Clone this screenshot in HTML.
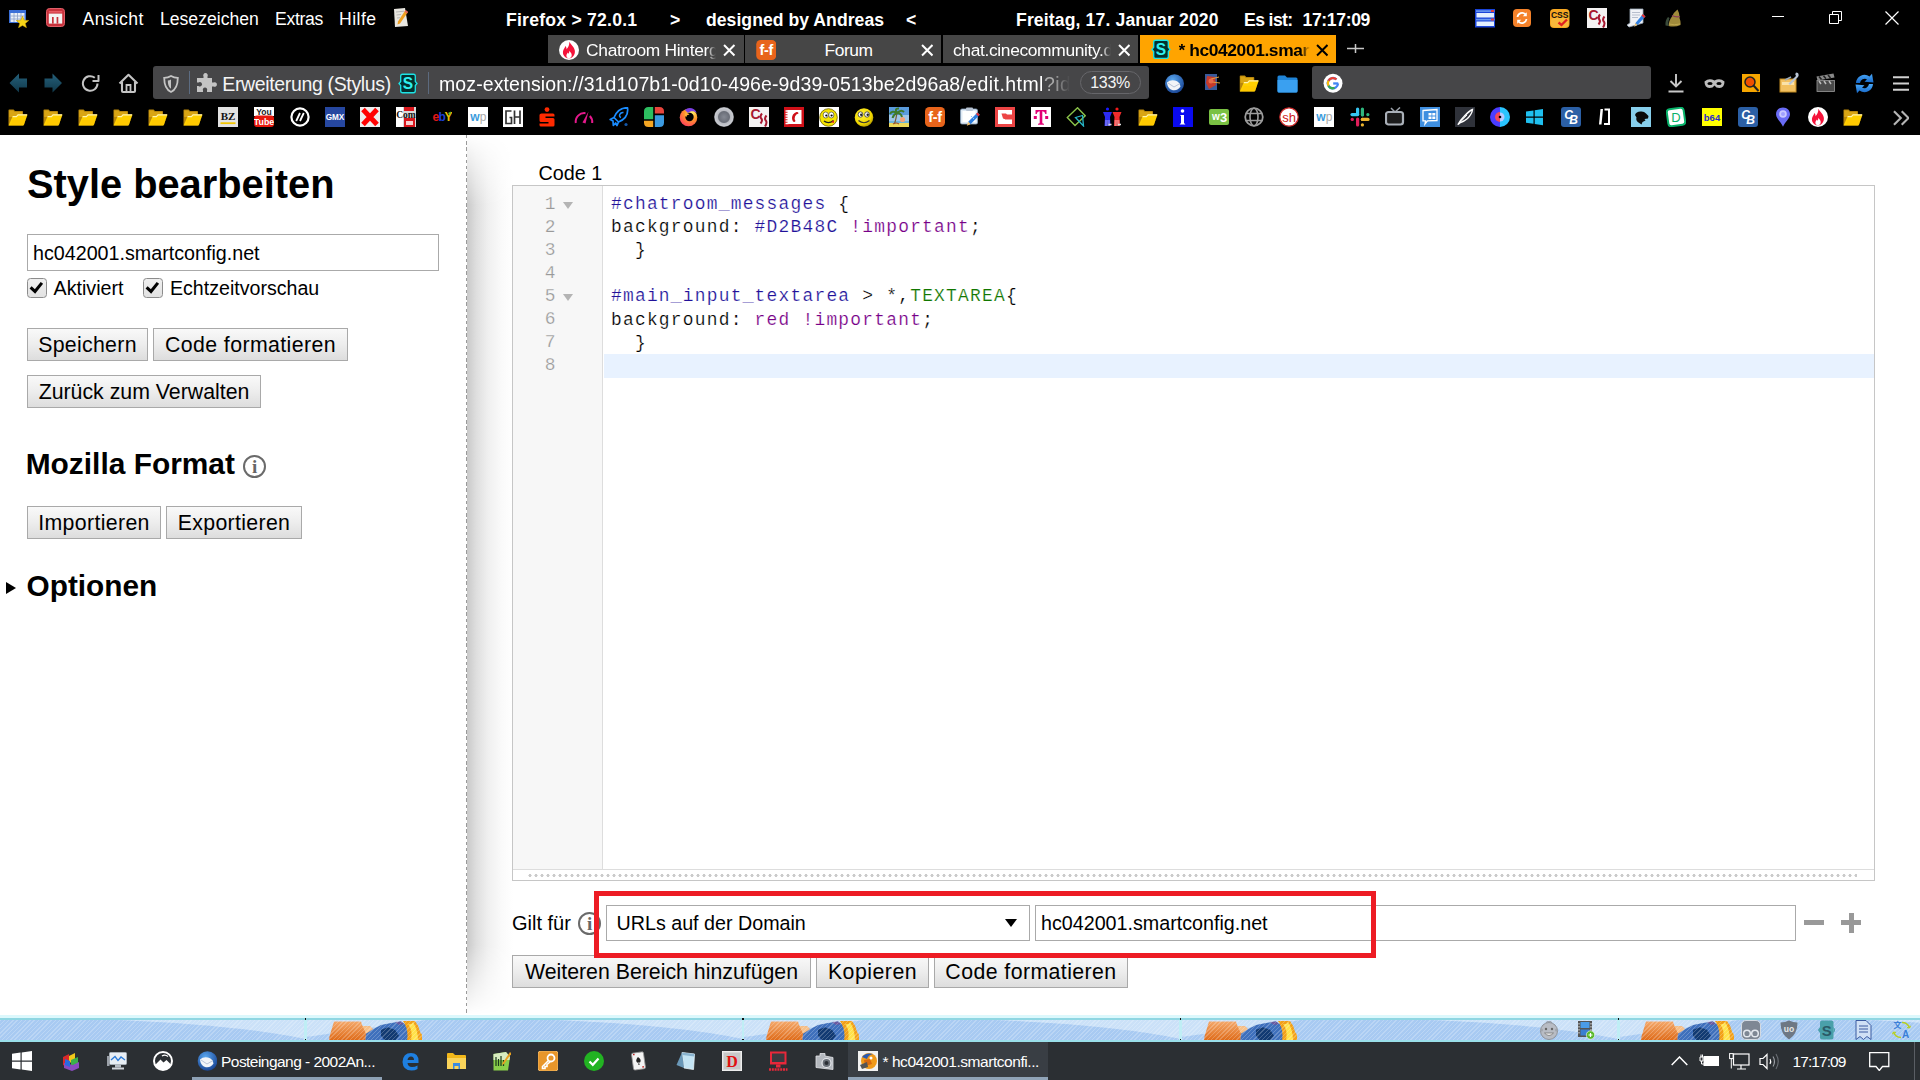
<!DOCTYPE html>
<html lang="de">
<head>
<meta charset="utf-8">
<title>* hc042001.smartconfig.net</title>
<style>
*{box-sizing:border-box;margin:0;padding:0}
html,body{width:1920px;height:1080px;overflow:hidden;background:#fff}
body{position:relative;font-family:"Liberation Sans",sans-serif;color:#000}
.abs{position:absolute}
.t{position:absolute;white-space:nowrap;line-height:1}
/* ---------- chrome ---------- */
#chrome{position:absolute;left:0;top:0;width:1920px;height:135px;background:#000;color:#fff;font-family:"Liberation Sans","DejaVu Sans",sans-serif}
/* ---------- page ---------- */
#page{position:absolute;left:0;top:135px;width:1920px;height:880px;background:#fff;overflow:hidden}
#divider{position:absolute;left:466px;top:0;width:1px;height:880px;background:repeating-linear-gradient(to bottom,#9a9a9a 0,#9a9a9a 3.4px,#fff 3.4px,#fff 6.2px)}
#shadow{position:absolute;left:467px;top:0;width:46px;height:880px;background:linear-gradient(to right,#c9c9c9 0,#dedede 20%,#efefef 45%,#fafafa 75%,#fff 100%);-webkit-mask-image:linear-gradient(to bottom,transparent 0,#000 70px,#000 810px,transparent 880px);mask-image:linear-gradient(to bottom,transparent 0,#000 70px,#000 810px,transparent 880px)}
.btn{position:absolute;height:33px;border:1px solid #a9a9a9;background:linear-gradient(#f9f9f9 0,#ededed 50%,#dddddd 100%);font-size:21.3px;line-height:33px;text-align:center;white-space:nowrap;color:#000}
.inp{position:absolute;border:1px solid #aaa;background:#fff;font-size:19.7px;white-space:nowrap;color:#000}
.cb{position:absolute;width:19.7px;height:19.7px;border:1px solid #8c8c8c;border-radius:3.5px;background:linear-gradient(#efefef,#e2e2e2)}
h1,h2{position:absolute;font-weight:bold;white-space:nowrap;line-height:1}
/* editor */
#ed{position:absolute;left:512px;top:50px;width:1363px;height:696px;border:1px solid #c6c6c6;background:#fff}
#gut{position:absolute;left:0;top:0;width:90px;height:683px;background:#f7f7f7;border-right:1px solid #ddd}
.ln{position:absolute;left:0;width:42.5px;text-align:right;font-size:17.9px;color:#999;line-height:23px;height:23px;font-family:"Liberation Mono",monospace;-webkit-text-stroke:.25px #f7f7f7}
.fold{position:absolute;left:49.7px;width:0;height:0;border-left:5px solid transparent;border-right:5px solid transparent;border-top:7.5px solid #b4b4b4}
.cl{position:absolute;left:98px;font-family:"Liberation Mono",monospace;font-size:17.9px;letter-spacing:1.23px;line-height:23px;height:23px;white-space:pre;color:#000;-webkit-text-stroke:.2px #fff}
.c-def{color:#219}.c-atom{color:#219}.c-kw{color:#708}.c-tag{color:#170}
/* ---------- bottom ---------- */
#addon{position:absolute;left:0;top:1015px;width:1920px;height:27px;background:#cbe1f8;border-top:3px solid #dcf8fc;border-bottom:2px solid #9adfea;overflow:hidden}
#addon:before{content:"";position:absolute;left:0;top:0;width:1920px;height:2px;background:#8fd6e2;z-index:3}
#task{position:absolute;left:0;top:1042px;width:1920px;height:38px;background:#2b2f33;color:#fff}
</style>
</head>
<body>
<div id="chrome">
<svg class="abs" style="left:9px;top:10px" width="20" height="18" viewBox="0 0 20 18" ><rect x="0" y="0" width="17" height="13" fill="#3a6fd8"/><rect x="1.5" y="3" width="14" height="9" fill="#e8eef8"/><path d="M1.5 6 h14 M1.5 9 h14 M5 3 v9 M8.5 3 v9 M12 3 v9" stroke="#8aa0c8" stroke-width=".8"/><path d="M13.5 6 L15.2 10.2 L19.8 10.5 L16.3 13.4 L17.5 17.8 L13.5 15.4 L9.5 17.8 L10.7 13.4 L7.2 10.5 L11.8 10.2 Z" fill="#f7d417" stroke="#c79a00" stroke-width=".5"/></svg>
<svg class="abs" style="left:46px;top:8px" width="19" height="19" viewBox="0 0 19 19" ><rect x="0.5" y="0.5" width="18" height="18" rx="3" fill="#c8323c" stroke="#e0606a" stroke-width="1"/><rect x="2.8" y="5.6" width="13.4" height="10" fill="#f4f4f4"/><rect x="2.8" y="3" width="13.4" height="1.6" fill="#e85a64"/><rect x="6" y="9" width="1.7" height="6.6" fill="#c8323c"/><rect x="10.6" y="9" width="1.7" height="6.6" fill="#c8323c"/></svg>
<div class="t" style="left:82.5px;top:10.5px;font-size:17.6px;color:#fff;font-weight:normal;letter-spacing:0.54px;">Ansicht</div>
<div class="t" style="left:160px;top:10.5px;font-size:17.6px;color:#fff;font-weight:normal;letter-spacing:0px;">Lesezeichen</div>
<div class="t" style="left:275px;top:10.5px;font-size:17.6px;color:#fff;font-weight:normal;letter-spacing:-0.31px;">Extras</div>
<div class="t" style="left:339px;top:10.5px;font-size:17.6px;color:#fff;font-weight:normal;letter-spacing:0.46px;">Hilfe</div>
<svg class="abs" style="left:393px;top:8px" width="16" height="19" viewBox="0 0 16 19" ><path d="M1 1 L12 0 L15 18 L2 19 Z" fill="#e8e6e0"/><path d="M3 4 L11 3.2 M3.5 7 L8 6.5 M4 10 L7 9.7" stroke="#aaa" stroke-width=".8"/><path d="M12.5 2 L15 4 L7 15.5 L4.5 16.5 L5 13.5 Z" fill="#f0a020"/><path d="M12.5 2 L15 4 L14 5.4 L11.6 3.4 Z" fill="#e06060"/></svg>
<div class="t" style="left:506px;top:11.7px;font-size:17.6px;color:#fff;font-weight:bold;letter-spacing:0.23px;">Firefox &gt; 72.0.1</div>
<div class="t" style="left:670px;top:11.7px;font-size:17.6px;color:#fff;font-weight:bold;letter-spacing:0px;">&gt;</div>
<div class="t" style="left:706px;top:11.7px;font-size:17.6px;color:#fff;font-weight:bold;letter-spacing:0.04px;">designed by Andreas</div>
<div class="t" style="left:906px;top:11.7px;font-size:17.6px;color:#fff;font-weight:bold;letter-spacing:0px;">&lt;</div>
<div class="t" style="left:1016px;top:11.7px;font-size:17.6px;color:#fff;font-weight:bold;letter-spacing:0.13px;">Freitag, 17. Januar 2020</div>
<div class="t" style="left:1244px;top:11.7px;font-size:17.6px;color:#fff;font-weight:bold;letter-spacing:-0.6px;">Es ist:</div>
<div class="t" style="left:1302.5px;top:11.7px;font-size:17.6px;color:#fff;font-weight:bold;letter-spacing:-0.37px;">17:17:09</div>
<svg class="abs" style="left:1474.5px;top:9px" width="20.5" height="18.5" viewBox="0 0 20.5 18.5" ><rect width="20.5" height="18.5" fill="#1a44d8"/><rect x="1.5" y="4" width="17.5" height="4.5" fill="#e4f0ff"/><rect x="1.5" y="12.5" width="17.5" height="4.5" fill="#e4f0ff"/><rect x="1" y="1.3" width="18.5" height="1.6" fill="#6a9af0"/><rect x="1" y="9.8" width="18.5" height="1.6" fill="#6a9af0"/><rect x="16" y="1" width="3" height="2" fill="#e04040"/><rect x="16" y="9.5" width="3" height="2" fill="#e04040"/></svg>
<svg class="abs" style="left:1513px;top:9px" width="18" height="18" viewBox="0 0 18 18" ><rect width="18" height="18" rx="4" fill="#f5822a"/><path d="M4.5 8 A4.6 4.6 0 0 1 12.5 5.5 M13.5 10 A4.6 4.6 0 0 1 5.5 12.5" fill="none" stroke="#fff" stroke-width="1.8"/><path d="M13.8 3.2 L13.8 7.2 L9.8 7.2 Z M4.2 14.8 L4.2 10.8 L8.2 10.8 Z" fill="#fff"/></svg>
<svg class="abs" style="left:1550px;top:8.5px" width="19.5" height="19" viewBox="0 0 19.5 19" ><rect width="19.5" height="19" rx="4" fill="#f7a823"/><rect x="1" y="9" width="17.5" height="9" rx="3" fill="#f9b83a"/><text x="9.7" y="9" font-family="Liberation Sans,sans-serif" font-size="8.5" font-weight="bold" fill="#111" text-anchor="middle" >CSS</text><path d="M8.5 13.5 L11.5 16 L17 10.5" fill="none" stroke="#e02020" stroke-width="2.4"/></svg>
<svg class="abs" style="left:1587px;top:8px" width="20" height="20" viewBox="0 0 20 20" ><rect width="20" height="20" fill="#f4f2f2"/><text x="6.5" y="11.5" font-family="Liberation Sans,sans-serif" font-size="14" font-weight="bold" fill="#a8182f" text-anchor="middle" >C</text><path d="M13 6.5 Q10.5 9.5 12.3 11.5 Q14 13.5 11.5 16.5" fill="none" stroke="#a8182f" stroke-width="2"/><path d="M17.5 8.5 Q15 11.5 16.8 13.5 Q18.5 15.5 16 19.5" fill="none" stroke="#a8182f" stroke-width="2"/></svg>
<svg class="abs" style="left:1625.5px;top:8px" width="20" height="20" viewBox="0 0 20 20" ><path d="M4 1 L17 1 L17 15 L3 19 L1 17 L4 15 Z" fill="#f0f2f6" stroke="#9aa8b8" stroke-width=".8"/><path d="M6 4.5 h8 M6 7 h8 M6 9.5 h6" stroke="#b0b8c8" stroke-width=".9"/><path d="M17 6 L19.5 8.5 L11.5 17 L8.5 18.5 L9.5 15 Z" fill="#2f7fe0"/><path d="M17 6 L19.5 8.5 L18 10 L15.5 7.5 Z" fill="#e83030"/><path d="M9.5 15 L11.5 17 L8.2 18.8 Z" fill="#f0c070"/></svg>
<svg class="abs" style="left:1663px;top:9px" width="20" height="18" viewBox="0 0 20 18" ><path d="M14.5 0.5 Q17 5 16.5 9 Q18 13 17.5 16 Q12 18.5 5.5 17 Q6 11 9 7.5 Q11 3 14.5 0.5 Z" fill="#a08a3a"/><path d="M5 8 Q2 11 2.5 16.5 L5.5 17 Q5 12 6.5 9 Z" fill="#3a4a3a"/><path d="M9 6.5 Q13 8.5 17 7.5" stroke="#8a3a5a" stroke-width="1.2" fill="none"/><path d="M6 15 Q11 16.5 17 15" stroke="#c0a850" stroke-width="1" fill="none"/></svg>
<div class="abs" style="left:1772px;top:16px;width:12px;height:1px;background:#fff"></div>
<svg class="abs" style="left:1828px;top:10px" width="14" height="14" viewBox="0 0 14 14" ><path d="M1.5 4.5 h9 v9 h-9 z" fill="none" stroke="#fff" stroke-width="1"/><path d="M4.5 4.5 v-3 h9 v9 h-3" fill="none" stroke="#fff" stroke-width="1"/></svg>
<svg class="abs" style="left:1884.5px;top:10.5px" width="14" height="14" viewBox="0 0 14 14" ><path d="M0.5 0.5 L13.5 13.5 M13.5 0.5 L0.5 13.5" stroke="#fff" stroke-width="1.2"/></svg>
<div class="abs" style="left:548px;top:35px;width:195.5px;height:27.7px;background:#464646"></div>
<div class="abs" style="left:745px;top:35px;width:195.5px;height:27.7px;background:#464646"></div>
<div class="abs" style="left:942.5px;top:35px;width:195.5px;height:27.7px;background:#464646"></div>
<div class="abs" style="left:1139.7px;top:35px;width:196.3px;height:27.7px;background:#ffa400"></div>
<svg class="abs" style="left:558.5px;top:40px" width="20" height="20" viewBox="0 0 20 20" ><circle cx="10" cy="10" r="10" fill="#fff"/><path d="M10.3 1.8 C11.8 5 15 6.2 15.8 10.5 C16.5 14.8 13.5 18.3 10 18.3 C6.3 18.3 3.5 15.3 4 11.5 C4.3 9.2 5.8 8 6.4 6 C7.3 6.9 7.6 8 7.5 9.2 C9.2 7.4 10.6 4.8 10.3 1.8 Z" fill="#f5133a"/><path d="M10.3 10.8 C11.6 12.4 12.9 13.5 12.7 15.5 C12.5 17.2 11.3 18.3 10 18.3 C8.5 18.3 7.4 17.2 7.4 15.7 C7.4 14.2 8.3 13.5 8.9 12.5 C9.3 13.1 9.4 13.6 9.4 14.1 C10 13.2 10.4 12.1 10.3 10.8 Z" fill="#fff"/></svg>
<div class="t" style="left:586px;top:41.8px;width:129.5px;overflow:hidden;font-size:17.400px;color:#fff;letter-spacing:-0.3px;-webkit-mask-image:linear-gradient(to right,#000 93%,transparent);mask-image:linear-gradient(to right,#000 93%,transparent)">Chatroom Hintergrund</div>
<svg class="abs" style="left:723px;top:44.0px" width="12.5" height="12.5" viewBox="0 0 12 12" ><path d="M1 1 L11 11 M11 1 L1 11" stroke="#fff" stroke-width="1.900"/></svg>
<svg class="abs" style="left:755.7px;top:40px" width="20.5" height="20" viewBox="0 0 20 20" ><rect width="20" height="20" rx="4.5" fill="#e8641b"/><text x="10" y="15" font-family="Liberation Sans,sans-serif" font-size="14.5" font-weight="bold" fill="#fff" text-anchor="middle" letter-spacing="-0.3">f-f</text></svg>
<div class="t" style="left:824.5px;top:41.8px;font-size:17.4px;color:#fff;font-weight:normal;letter-spacing:-0.45px;">Forum</div>
<svg class="abs" style="left:920.5px;top:44.0px" width="12.5" height="12.5" viewBox="0 0 12 12" ><path d="M1 1 L11 11 M11 1 L1 11" stroke="#fff" stroke-width="1.900"/></svg>
<div class="t" style="left:953px;top:41.8px;width:158px;overflow:hidden;font-size:17.400px;color:#fff;letter-spacing:-0.35px;-webkit-mask-image:linear-gradient(to right,#000 94%,transparent);mask-image:linear-gradient(to right,#000 94%,transparent)">chat.cinecommunity.de</div>
<svg class="abs" style="left:1117.5px;top:44.0px" width="12.5" height="12.5" viewBox="0 0 12 12" ><path d="M1 1 L11 11 M11 1 L1 11" stroke="#fff" stroke-width="1.900"/></svg>
<svg class="abs" style="left:1151px;top:38.7px" width="20" height="20.8" viewBox="0 0 20 20" preserveAspectRatio="none"><path d="M4.5 1.2 L15.5 1.2 Q17.3 1.2 17.3 3.2 L17.3 8 L19 10 L17.3 12 L17.3 16.8 Q17.3 18.8 15.5 18.8 L4.5 18.8 Q2.7 18.8 2.7 16.8 L2.7 12 L1 10 L2.7 8 L2.7 3.2 Q2.7 1.2 4.5 1.2 Z" fill="#04302f" stroke="#1ce4e6" stroke-width="1.3"/><text x="10" y="15.6" font-family="Liberation Sans,sans-serif" font-size="15.5" font-weight="bold" fill="#2ff0f0" text-anchor="middle" >S</text></svg>
<div class="t" style="left:1178.5px;top:41.5px;width:131px;overflow:hidden;font-size:17.400px;color:#000;font-weight:bold;letter-spacing:-0.4px;-webkit-mask-image:linear-gradient(to right,#000 93%,transparent);mask-image:linear-gradient(to right,#000 93%,transparent)">* hc042001.smartconfig</div>
<svg class="abs" style="left:1315.5px;top:44.0px" width="12.5" height="12.5" viewBox="0 0 12 12" ><path d="M1 1 L11 11 M11 1 L1 11" stroke="#000" stroke-width="1.900"/></svg>
<svg class="abs" style="left:1346.5px;top:39.7px" width="17" height="17" viewBox="0 0 17 17" ><path d="M0 8.5 h17 M8.5 4 v9" stroke="#c8c8c8" stroke-width="1.5"/></svg>
<svg class="abs" style="left:9px;top:73px" width="18.5" height="20" viewBox="0 0 18.5 20" ><defs><linearGradient id="ag" x1="0" y1="0" x2="0" y2="1"><stop offset="0" stop-color="#25607a"/><stop offset="1" stop-color="#10384a"/></linearGradient></defs><path d="M0.5 10 L10 0.5 L10 5.5 L18 5.5 L18 14.5 L10 14.5 L10 19.5 Z" fill="url(#ag)"/></svg>
<svg class="abs" style="transform:scaleX(-1);left:43.5px;top:73px" width="18.5" height="20" viewBox="0 0 18.5 20"><defs><linearGradient id="ag" x1="0" y1="0" x2="0" y2="1"><stop offset="0" stop-color="#25607a"/><stop offset="1" stop-color="#10384a"/></linearGradient></defs><path d="M0.5 10 L10 0.5 L10 5.5 L18 5.5 L18 14.5 L10 14.5 L10 19.5 Z" fill="url(#ag)"/></svg>
<svg class="abs" style="left:81px;top:73px" width="20" height="20" viewBox="0 0 20 20" ><path d="M16.5 10.5 A7.3 7.3 0 1 1 13.8 4.8" fill="none" stroke="#c4c4c4" stroke-width="2"/><path d="M11.5 8 L17.5 8 L17.5 2" fill="none" stroke="#c4c4c4" stroke-width="2" stroke-linejoin="round"/></svg>
<svg class="abs" style="left:117.5px;top:72.5px" width="21" height="21" viewBox="0 0 21 21" ><path d="M1.5 10.5 L10.5 1.8 L19.5 10.5 M4 9 L4 18 Q4 19 5 19 L16 19 Q17 19 17 18 L17 9" fill="none" stroke="#c4c4c4" stroke-width="2.1" stroke-linejoin="round"/><path d="M8.5 19 L8.5 12 L12.5 12 L12.5 19" fill="none" stroke="#c4c4c4" stroke-width="1.8"/></svg>
<div class="abs" style="left:153px;top:66px;width:996px;height:33px;background:#464648;border-radius:3px"></div>
<svg class="abs" style="left:163px;top:74.5px" width="16" height="18" viewBox="0 0 16 18" ><path d="M8 1 C5.5 2.5 3 2.8 1.2 2.8 C1.2 9 2.5 14.5 8 17 C13.5 14.5 14.8 9 14.8 2.8 C13 2.8 10.5 2.5 8 1 Z" fill="none" stroke="#c4c4c4" stroke-width="1.8"/><path d="M8 4.5 L8 13.8 C5.5 12 4.8 9 4.8 5.5 C6 5.400 7 5 8 4.5 Z" fill="#c4c4c4"/></svg>
<div class="abs" style="left:189px;top:71px;width:1px;height:23px;background:#5c6c82"></div>
<svg class="abs" style="left:196px;top:73px" width="21" height="20" viewBox="0 0 21 20" ><path d="M7.5 3.5 A2.3 2.3 0 1 1 11.5 3.5 L11.5 5 L16 5 L16 9.5 L17.5 9.5 A2.3 2.3 0 1 1 17.5 13.5 L16 13.5 L16 19 L11 19 L11 17.5 A2.2 2.2 0 1 0 7 17.5 L7 19 L1 19 L1 13 L2.5 13 A2.2 2.2 0 1 0 2.5 9.5 L1 9.5 L1 5 L7.5 5 Z" fill="#c4c4c4"/></svg>
<div class="t" style="left:222.3px;top:74.5px;font-size:19.5px;color:#f4f4f4;font-weight:normal;letter-spacing:-0.35px;">Erweiterung (Stylus)</div>
<svg class="abs" style="left:398px;top:72.5px" width="20" height="21" viewBox="0 0 20 20" preserveAspectRatio="none"><path d="M4.5 1.2 L15.5 1.2 Q17.3 1.2 17.3 3.2 L17.3 8 L19 10 L17.3 12 L17.3 16.8 Q17.3 18.8 15.5 18.8 L4.5 18.8 Q2.7 18.8 2.7 16.8 L2.7 12 L1 10 L2.7 8 L2.7 3.2 Q2.7 1.2 4.5 1.2 Z" fill="#04302f" stroke="#1ce4e6" stroke-width="1.3"/><text x="10" y="15.6" font-family="Liberation Sans,sans-serif" font-size="15.5" font-weight="bold" fill="#2ff0f0" text-anchor="middle" >S</text></svg>
<div class="abs" style="left:428px;top:72px;width:1px;height:22px;background:#5c6a7e"></div>
<div class="t" style="left:439px;top:74.7px;width:631px;overflow:hidden;font-size:19.5px;letter-spacing:.1px;color:#fff;-webkit-mask-image:linear-gradient(to right,#000 97.5%,transparent);mask-image:linear-gradient(to right,#000 97.5%,transparent)" id="urltxt">moz-extension://31d107b1-0d10-496e-9d39-0513be2d96a8<span style="letter-spacing:.45px">/edit.html<span style="color:#a8a8a8">?id</span></span></div>
<div class="abs" style="left:1080px;top:71px;width:61px;height:23px;border:1px solid #66666a;border-radius:12px"></div>
<div class="t" style="left:1090.3px;top:75.3px;font-size:16px;color:#f4f4f4;font-weight:normal;letter-spacing:-0.35px;">133%</div>
<svg class="abs" style="left:1163.5px;top:73.5px" width="20.5" height="19.5" viewBox="0 0 20.5 19.5" ><defs><radialGradient id="tbg" cx=".4" cy=".3" r=".8"><stop offset="0" stop-color="#5aa8f0"/><stop offset="1" stop-color="#123a8a"/></radialGradient></defs><circle cx="10.5" cy="9.8" r="9.5" fill="url(#tbg)"/><path d="M3 8.5 Q6 5.5 11 6.5 Q15.5 7.5 16.5 12.5 Q14 17 8 16 Q3.5 14.5 3 8.5 Z" fill="#f2f4f8"/><path d="M4 9 L10 13 L16 9.5" fill="none" stroke="#b8c4d8" stroke-width="1"/></svg>
<svg class="abs" style="left:1203px;top:73px" width="18" height="19" viewBox="0 0 18 19" ><rect x="2" y="1" width="12" height="16" fill="#3a5a9a"/><path d="M4 3 L12 4 L13 12 L6 16 L3 10 Z" fill="#c83a2a"/><path d="M8 6 L16 4 M9 9 L17 10" stroke="#e0a040" stroke-width="1"/><circle cx="8" cy="8" r="2.5" fill="#e86a4a"/></svg>
<svg class="abs" style="left:1238.5px;top:73px" width="20.5" height="20" viewBox="0 0 20 20" ><path d="M0.5 3.2 Q0.5 2.4 1.3 2.4 L5.6 2.4 L7 4 L14.2 4 Q15 4 15 4.8 L15 18.4 L0.5 18.4 Z" fill="#b8860b"/><path d="M1.2 3.6 L5.2 3.6 L6.6 5 L14 5 L14 10 L1.2 10 Z" fill="#d9a514"/><path d="M4.6 9.2 L8.2 9.2 L9.8 7.4 L19.6 7.4 L15.6 18.4 L0.6 18.4 Z" fill="#ffd000"/><path d="M4.6 9.6 L8.4 9.6 L10 7.9 L19 7.9" fill="none" stroke="#fff3b0" stroke-width="1.1"/><path d="M3 18 L16 18 L17.5 13 L4.5 13 Z" fill="#ffc400" opacity=".6"/></svg>
<svg class="abs" style="left:1276.5px;top:73.5px" width="21" height="19" viewBox="0 0 21 19" ><path d="M0.5 3 Q0.5 1.5 2 1.5 L8 1.5 L10 3.5 L19 3.5 Q20.5 3.5 20.5 5 L20.5 17 Q20.5 18.5 19 18.5 L2 18.5 Q0.5 18.5 0.5 17 Z" fill="#1f84d8"/><path d="M0.5 6 L20.5 6 L20.5 17 Q20.5 18.5 19 18.5 L2 18.5 Q0.5 18.5 0.5 17 Z" fill="#3aa0f0"/></svg>
<div class="abs" style="left:1312px;top:66px;width:339px;height:33px;background:#464648;border-radius:3px"></div>
<svg class="abs" style="left:1322.5px;top:72.7px" width="20.5" height="20.5" viewBox="0 0 19.5 18" ><circle cx="9.5" cy="9" r="9" fill="#fff"/><path d="M14.3 9.2 A4.900 4.900 0 1 1 12.8 5.400" fill="none" stroke="#4285f4" stroke-width="2.2"/><path d="M5.2 6.6 A4.900 4.900 0 0 1 12.8 5.400" fill="none" stroke="#ea4335" stroke-width="2.2"/><path d="M5.2 11.400 A4.900 4.900 0 0 1 5.2 6.6" fill="none" stroke="#fbbc05" stroke-width="2.2"/><path d="M11 13.400 A4.900 4.900 0 0 1 5.2 11.400" fill="none" stroke="#34a853" stroke-width="2.2"/><path d="M9.7 9.2 h4.8" stroke="#4285f4" stroke-width="2.2"/></svg>
<svg class="abs" style="left:1668px;top:73px" width="16" height="20" viewBox="0 0 16 20" ><path d="M8 1 L8 13 M2.5 8 L8 13.5 L13.5 8 M0.5 18.5 L15.5 18.5" fill="none" stroke="#c8c8c8" stroke-width="1.900"/></svg>
<svg class="abs" style="left:1703.5px;top:78px" width="21" height="10.5" viewBox="0 0 21 10.5" ><path d="M0.5 3.5 Q5 -0.5 10.5 2.5 Q16 -0.5 20.5 3.5 Q20.5 9.5 15.5 10 Q12 10 10.5 7.5 Q9 10 5.5 10 Q0.5 9.5 0.5 3.5 Z" fill="#bdbdbd"/><ellipse cx="6" cy="5.5" rx="2.6" ry="1.6" fill="#000"/><ellipse cx="15" cy="5.5" rx="2.6" ry="1.6" fill="#000"/></svg>
<svg class="abs" style="left:1742px;top:73.5px" width="18" height="18.5" viewBox="0 0 18 18.5" ><rect width="18" height="18.5" fill="#f7a600"/><circle cx="8" cy="8" r="5" fill="#f05000" stroke="#222" stroke-width="1.5"/><path d="M11.5 11.5 L16.5 17" stroke="#222" stroke-width="2"/></svg>
<svg class="abs" style="left:1778.5px;top:72px" width="21" height="21" viewBox="0 0 21 21" ><rect x="1" y="7" width="16" height="13" fill="#f2c060" stroke="#c08a20" stroke-width="1"/><rect x="3" y="10" width="12" height="3" fill="#fbe2a8"/><path d="M19 1 Q20.5 3.5 18.5 5.5 L11 13 L9.5 11.5 L17 4 Q15.5 2 17 0.5 Z" fill="#b8c4d4"/><path d="M6 8 L12 5" stroke="#9ab" stroke-width="1.5"/></svg>
<svg class="abs" style="left:1816px;top:73px" width="19.5" height="19" viewBox="0 0 19.5 19" ><rect x="1" y="7.5" width="17.5" height="11" fill="#4a4a4a" stroke="#999" stroke-width=".8"/><path d="M0.5 3.5 L17.5 0.5 L18.5 4.5 L1.5 7.5 Z" fill="#888"/><path d="M3 3.5 L5.5 6.5 M7.5 2.7 L10 5.7 M12 1.900 L14.5 4.900" stroke="#222" stroke-width="1.6"/><path d="M3 8 L5 11 M8 8 L10 11 M13 8 L15 11" stroke="#bbb" stroke-width="1.5"/></svg>
<svg class="abs" style="left:1853.5px;top:72.5px" width="21" height="21" viewBox="0 0 21 21" ><defs><linearGradient id="syg" x1="0" y1="0" x2="0" y2="1"><stop offset="0" stop-color="#4aa8f8"/><stop offset="1" stop-color="#1668c8"/></linearGradient></defs><path d="M2 10 A8.5 8.5 0 0 1 15.5 3.5 L18 0.8 L19.5 9.5 L10.5 8.8 L13 6.2 A5 5 0 0 0 6 10 Z" fill="url(#syg)"/><path d="M19 11 A8.5 8.5 0 0 1 5.5 17.5 L3 20.2 L1.5 11.5 L10.5 12.2 L8 14.8 A5 5 0 0 0 15 11 Z" fill="url(#syg)"/></svg>
<svg class="abs" style="left:1893px;top:76px" width="16" height="15" viewBox="0 0 16 15" ><path d="M0 1.2 h16 M0 7.5 h16 M0 13.8 h16" stroke="#d0d0d0" stroke-width="2"/></svg>
<svg class="abs" style="left:8.1px;top:107px" width="20" height="20" viewBox="0 0 20 20" ><path d="M0.5 3.2 Q0.5 2.4 1.3 2.4 L5.6 2.4 L7 4 L14.2 4 Q15 4 15 4.8 L15 18.4 L0.5 18.4 Z" fill="#b8860b"/><path d="M1.2 3.6 L5.2 3.6 L6.6 5 L14 5 L14 10 L1.2 10 Z" fill="#d9a514"/><path d="M4.6 9.2 L8.2 9.2 L9.8 7.4 L19.6 7.4 L15.6 18.4 L0.6 18.4 Z" fill="#ffd000"/><path d="M4.6 9.6 L8.4 9.6 L10 7.9 L19 7.9" fill="none" stroke="#fff3b0" stroke-width="1.1"/><path d="M3 18 L16 18 L17.5 13 L4.5 13 Z" fill="#ffc400" opacity=".6"/></svg>
<svg class="abs" style="left:43.1px;top:107px" width="20" height="20" viewBox="0 0 20 20" ><path d="M0.5 3.2 Q0.5 2.4 1.3 2.4 L5.6 2.4 L7 4 L14.2 4 Q15 4 15 4.8 L15 18.4 L0.5 18.4 Z" fill="#b8860b"/><path d="M1.2 3.6 L5.2 3.6 L6.6 5 L14 5 L14 10 L1.2 10 Z" fill="#d9a514"/><path d="M4.6 9.2 L8.2 9.2 L9.8 7.4 L19.6 7.4 L15.6 18.4 L0.6 18.4 Z" fill="#ffd000"/><path d="M4.6 9.6 L8.4 9.6 L10 7.9 L19 7.9" fill="none" stroke="#fff3b0" stroke-width="1.1"/><path d="M3 18 L16 18 L17.5 13 L4.5 13 Z" fill="#ffc400" opacity=".6"/></svg>
<svg class="abs" style="left:78.1px;top:107px" width="20" height="20" viewBox="0 0 20 20" ><path d="M0.5 3.2 Q0.5 2.4 1.3 2.4 L5.6 2.4 L7 4 L14.2 4 Q15 4 15 4.8 L15 18.4 L0.5 18.4 Z" fill="#b8860b"/><path d="M1.2 3.6 L5.2 3.6 L6.6 5 L14 5 L14 10 L1.2 10 Z" fill="#d9a514"/><path d="M4.6 9.2 L8.2 9.2 L9.8 7.4 L19.6 7.4 L15.6 18.4 L0.6 18.4 Z" fill="#ffd000"/><path d="M4.6 9.6 L8.4 9.6 L10 7.9 L19 7.9" fill="none" stroke="#fff3b0" stroke-width="1.1"/><path d="M3 18 L16 18 L17.5 13 L4.5 13 Z" fill="#ffc400" opacity=".6"/></svg>
<svg class="abs" style="left:113.1px;top:107px" width="20" height="20" viewBox="0 0 20 20" ><path d="M0.5 3.2 Q0.5 2.4 1.3 2.4 L5.6 2.4 L7 4 L14.2 4 Q15 4 15 4.8 L15 18.4 L0.5 18.4 Z" fill="#b8860b"/><path d="M1.2 3.6 L5.2 3.6 L6.6 5 L14 5 L14 10 L1.2 10 Z" fill="#d9a514"/><path d="M4.6 9.2 L8.2 9.2 L9.8 7.4 L19.6 7.4 L15.6 18.4 L0.6 18.4 Z" fill="#ffd000"/><path d="M4.6 9.6 L8.4 9.6 L10 7.9 L19 7.9" fill="none" stroke="#fff3b0" stroke-width="1.1"/><path d="M3 18 L16 18 L17.5 13 L4.5 13 Z" fill="#ffc400" opacity=".6"/></svg>
<svg class="abs" style="left:148.1px;top:107px" width="20" height="20" viewBox="0 0 20 20" ><path d="M0.5 3.2 Q0.5 2.4 1.3 2.4 L5.6 2.4 L7 4 L14.2 4 Q15 4 15 4.8 L15 18.4 L0.5 18.4 Z" fill="#b8860b"/><path d="M1.2 3.6 L5.2 3.6 L6.6 5 L14 5 L14 10 L1.2 10 Z" fill="#d9a514"/><path d="M4.6 9.2 L8.2 9.2 L9.8 7.4 L19.6 7.4 L15.6 18.4 L0.6 18.4 Z" fill="#ffd000"/><path d="M4.6 9.6 L8.4 9.6 L10 7.9 L19 7.9" fill="none" stroke="#fff3b0" stroke-width="1.1"/><path d="M3 18 L16 18 L17.5 13 L4.5 13 Z" fill="#ffc400" opacity=".6"/></svg>
<svg class="abs" style="left:183.1px;top:107px" width="20" height="20" viewBox="0 0 20 20" ><path d="M0.5 3.2 Q0.5 2.4 1.3 2.4 L5.6 2.4 L7 4 L14.2 4 Q15 4 15 4.8 L15 18.4 L0.5 18.4 Z" fill="#b8860b"/><path d="M1.2 3.6 L5.2 3.6 L6.6 5 L14 5 L14 10 L1.2 10 Z" fill="#d9a514"/><path d="M4.6 9.2 L8.2 9.2 L9.8 7.4 L19.6 7.4 L15.6 18.4 L0.6 18.4 Z" fill="#ffd000"/><path d="M4.6 9.6 L8.4 9.6 L10 7.9 L19 7.9" fill="none" stroke="#fff3b0" stroke-width="1.1"/><path d="M3 18 L16 18 L17.5 13 L4.5 13 Z" fill="#ffc400" opacity=".6"/></svg>
<svg class="abs" style="left:218.1px;top:107px" width="20" height="20" viewBox="0 0 20 20" ><rect width="20" height="20" fill="#e2e2e2"/><text x="10" y="12.5" font-family="Liberation Serif,sans-serif" font-size="11" font-weight="bold" fill="#111" text-anchor="middle" >BZ</text><rect x="2.5" y="15.3" width="15" height="1.8" fill="#f2c500"/></svg>
<svg class="abs" style="left:254px;top:107px" width="20" height="20" viewBox="0 0 20 20" ><rect width="20" height="9" fill="#fff"/><text x="10" y="7.5" font-family="Liberation Sans,sans-serif" font-size="8.5" font-weight="bold" fill="#222" text-anchor="middle" >You</text><rect y="8.5" width="20" height="11.5" rx="3" fill="#e8180c"/><text x="10" y="17.5" font-family="Liberation Sans,sans-serif" font-size="8.8" font-weight="bold" fill="#fff" text-anchor="middle" >Tube</text></svg>
<svg class="abs" style="left:290px;top:107px" width="20" height="20" viewBox="0 0 20 20" ><circle cx="10" cy="10" r="8.6" fill="#000" stroke="#fff" stroke-width="2.2"/><path d="M6.2 14 L10 6 M10 14 L13.8 6" stroke="#fff" stroke-width="1.8"/></svg>
<svg class="abs" style="left:325px;top:107px" width="20" height="20" viewBox="0 0 20 20" ><rect width="20" height="20" fill="#2647a0"/><text x="10" y="13" font-family="Liberation Sans,sans-serif" font-size="8.2" font-weight="bold" fill="#fff" text-anchor="middle" >GMX</text></svg>
<svg class="abs" style="left:360px;top:107px" width="20" height="20" viewBox="0 0 20 20" ><rect width="20" height="20" fill="#ececec"/><path d="M3 2.5 L17 17.5 M17 2.5 L3 17.5" stroke="#f00" stroke-width="5"/></svg>
<svg class="abs" style="left:396px;top:107px" width="20" height="20" viewBox="0 0 20 20" ><rect width="20" height="20" fill="#d8d8d8"/><rect x="0" y="0" width="7" height="20" fill="#fff"/><rect x="8" y="0" width="10" height="4" fill="#d8161c"/><rect x="8" y="11" width="11" height="9" fill="#d8161c"/><rect x="10" y="14" width="7" height="4" fill="#fff" opacity=".8"/><text x="10" y="10.5" font-family="Liberation Serif,sans-serif" font-size="9.5" font-weight="bold" fill="#111" text-anchor="middle" >Com</text></svg>
<svg class="abs" style="left:432px;top:107px" width="20" height="20" viewBox="0 0 20 20" ><text x="0.5" y="14" font-family="Liberation Sans,sans-serif" font-size="12" font-weight="bold" fill="#e01818" text-anchor="start" >e</text><text x="6.5" y="14" font-family="Liberation Sans,sans-serif" font-size="12" font-weight="bold" fill="#1a3fd6" text-anchor="start" >b</text><text x="12.5" y="14" font-family="Liberation Sans,sans-serif" font-size="12" font-weight="bold" fill="#e8c000" text-anchor="start" >Y</text><path d="M16 6 L19 4.5 L18 9 Z" fill="#5ab82a"/></svg>
<svg class="abs" style="left:468px;top:107px" width="20" height="20" viewBox="0 0 20 20" ><rect width="20" height="20" fill="#fff"/><text x="6.8" y="13.5" font-family="Liberation Sans,sans-serif" font-size="12" font-weight="bold" fill="#3a9bdc" text-anchor="middle" >w</text><text x="15" y="13.5" font-family="Liberation Sans,sans-serif" font-size="12" font-weight="normal" fill="#aaa" text-anchor="middle" >p</text></svg>
<svg class="abs" style="left:503px;top:107px" width="20" height="20" viewBox="0 0 20 20" ><rect width="20" height="20" fill="#fff"/><path d="M8.5 4 L3 4 L3 16.5 L8.5 16.5 L8.5 10.5 L6.5 10.5 M11.5 3.5 L11.5 17 M17 3.5 L17 17 M11.5 10 L17 10" fill="none" stroke="#333" stroke-width="1.7"/></svg>
<svg class="abs" style="left:539px;top:107px" width="20" height="20" viewBox="0 0 20 20" ><circle cx="8" cy="2.6" r="2.4" fill="#ff2a00"/><path d="M2.5 6.5 L14 6.5 Q15.5 6.5 15.5 8 L15.5 9.6 L6.5 9.6 L6.5 11 L14 11 Q15.5 11 15.5 12.5 L15.5 18 Q15.5 19.5 14 19.5 L2 19.5 Q0.5 19.5 0.5 18 L0.5 16.4 L9.5 16.4 L9.5 15 L2 15 Q0.5 15 0.5 13.5 L0.5 8 Q0.5 6.5 2.5 6.5 Z" fill="#ff2a00"/></svg>
<svg class="abs" style="left:574.4px;top:107px" width="20" height="20" viewBox="0 0 20 20" ><path d="M1.8 16 A8.6 8.6 0 0 1 11.5 6.2 M15.8 9 A8.6 8.6 0 0 1 18.2 16" fill="none" stroke="#e5198c" stroke-width="2"/><path d="M8.5 15.5 L14.5 4.5 L11.5 16.5 Z" fill="#e5198c"/></svg>
<svg class="abs" style="left:609.4px;top:107px" width="20" height="20" viewBox="0 0 20 20" ><path d="M18.5 0.8 C12 0.5 7.5 4.5 5 10.5 L9.5 15 C15.5 12.5 19.5 7.5 18.5 0.8 Z M5 10.5 L1.2 12.5 L4 14 L4.3 18.5 L6.6 16 L8 18.5 L9.5 15" fill="none" stroke="#1a8cff" stroke-width="1.7" stroke-linejoin="round"/><path d="M14.5 5.5 C11 5 9 9.5 12 10.5" fill="none" stroke="#1a8cff" stroke-width="1.5"/><circle cx="17" cy="17.5" r="1.6" fill="#1457a8"/></svg>
<svg class="abs" style="left:644px;top:107px" width="20" height="20" viewBox="0 0 20 20" ><path d="M4.5 0 L9.2 0 L9.2 12.2 L0 12.2 L0 4.5 Q0 0 4.5 0 Z" fill="#2dbe60"/><path d="M10.8 0 L15.5 0 Q20 0 20 4.5 L20 6.6 L10.8 6.6 Z" fill="#e8453c"/><path d="M0 13.8 L9.2 13.8 L9.2 20 L4.5 20 Q0 20 0 15.5 Z" fill="#f5a623"/><path d="M10.8 8.2 L20 8.2 L20 15.5 Q20 20 15.5 20 L10.8 20 Z" fill="#3b9ae1"/></svg>
<svg class="abs" style="left:679px;top:107px" width="20" height="20" viewBox="0 0 20 20" ><defs><radialGradient id="fxg" cx="0.7" cy="0.2" r="0.9"><stop offset="0" stop-color="#fff36b"/><stop offset=".45" stop-color="#ff9a2a"/><stop offset="1" stop-color="#ff3a5e"/></radialGradient></defs><circle cx="9.5" cy="10.5" r="8.8" fill="url(#fxg)"/><path d="M6 3 C9 -0.5 16 0.5 17.8 6 C15 3.5 11 4 9 6 Z" fill="#7b3fe4"/><circle cx="10.5" cy="10" r="4.2" fill="#000"/><path d="M6 6.5 C8 5.5 10 6.5 10.5 8 C9 7.5 7.5 8.5 7.5 10 C6 9.5 5.5 8 6 6.5 Z" fill="#ffb13a"/></svg>
<svg class="abs" style="left:714px;top:107px" width="20" height="20" viewBox="0 0 20 20" ><defs><radialGradient id="gsg" cx="0.5" cy="0.5" r="0.5"><stop offset="0" stop-color="#858993"/><stop offset=".55" stop-color="#6a6e78"/><stop offset=".66" stop-color="#b9bbc2"/><stop offset=".9" stop-color="#c9cbd0"/><stop offset="1" stop-color="#9a9ca4"/></radialGradient></defs><circle cx="10" cy="10" r="9.9" fill="url(#gsg)"/></svg>
<svg class="abs" style="left:749px;top:107px" width="20" height="20" viewBox="0 0 20 20" ><rect width="20" height="20" fill="#f4f2f2"/><text x="6.5" y="11.5" font-family="Liberation Sans,sans-serif" font-size="14" font-weight="bold" fill="#a8182f" text-anchor="middle" >C</text><path d="M13 6.5 Q10.5 9.5 12.3 11.5 Q14 13.5 11.5 16.5" fill="none" stroke="#a8182f" stroke-width="2"/><path d="M17.5 8.5 Q15 11.5 16.8 13.5 Q18.5 15.5 16 19.5" fill="none" stroke="#a8182f" stroke-width="2"/></svg>
<svg class="abs" style="left:784px;top:107px" width="20" height="20" viewBox="0 0 20 20" ><rect width="20" height="20" fill="#cf1018"/><rect x="3.5" y="3" width="14" height="14" fill="#fff"/><path d="M1.5 4 h3 M1.5 6.5 h3 M1.5 9 h3 M1.5 11.5 h3 M1.5 14 h3 M1.5 16.5 h3" stroke="#fff" stroke-width="1.3"/><path d="M12.5 5 Q14.5 4.5 14.5 6.5 Q12 7 11 9.5 Q10 12 11.5 14 Q10.5 15.5 9 14.5 Q7 11 9 7.5 Q10.5 5.5 12.5 5 Z" fill="#cf1018"/></svg>
<svg class="abs" style="left:819px;top:107px" width="20" height="20" viewBox="0 0 20 20" ><rect width="20" height="20" fill="#fff"/><circle cx="9.5" cy="10.5" r="8.8" fill="#f5e400" stroke="#6b5c00" stroke-width=".8"/><ellipse cx="6.7" cy="8" rx="2.6" ry="3" fill="#fff" stroke="#333" stroke-width=".6"/><ellipse cx="12.3" cy="8" rx="2.6" ry="3" fill="#fff" stroke="#333" stroke-width=".6"/><circle cx="7.3" cy="8.5" r="1.1" fill="#000"/><circle cx="12.6" cy="8.5" r="1.1" fill="#000"/><path d="M5 14 Q9.5 17.5 14.5 13.5" fill="none" stroke="#222" stroke-width="1.3"/><path d="M12 15.2 L14.8 13.3 L15 16 Z" fill="#e02020"/></svg>
<svg class="abs" style="left:854px;top:107px" width="20" height="20" viewBox="0 0 20 20" ><defs><radialGradient id="smg" cx=".4" cy=".35" r=".7"><stop offset="0" stop-color="#fff23a"/><stop offset=".7" stop-color="#f2d800"/><stop offset="1" stop-color="#a89000"/></radialGradient></defs><circle cx="10" cy="10.5" r="9.3" fill="url(#smg)"/><ellipse cx="6.5" cy="7.5" rx="2.4" ry="2.7" fill="#fff" stroke="#333" stroke-width=".8"/><ellipse cx="13" cy="7.5" rx="2.4" ry="2.7" fill="#fff" stroke="#333" stroke-width=".8"/><circle cx="7.2" cy="7.8" r="1.2" fill="#222"/><circle cx="13.7" cy="7.8" r="1.2" fill="#222"/><path d="M4.5 13.5 Q10 18 15.5 13.5" fill="none" stroke="#333" stroke-width="1.2"/></svg>
<svg class="abs" style="left:889px;top:107px" width="20" height="20" viewBox="0 0 20 20" ><rect width="20" height="20" fill="#5a9bdc"/><rect y="8" width="20" height="6" fill="#9fc6e8"/><rect y="16" width="20" height="4" fill="#ecd85a"/><rect y="14" width="20" height="2" fill="#6fb3d9"/><circle cx="13.5" cy="12.5" r="2.6" fill="#f3a27a"/><path d="M8 6 Q7 12 5.5 17" stroke="#7a5a30" stroke-width="1.2" fill="none"/><path d="M8 6 Q3 3 1 7 M8 6 Q5 1 10 1.5 M8 6 Q12 2 15 5 M8 6 Q12 6 13 10 M8 6 Q5 7 3.5 11" stroke="#3f7a2a" stroke-width="2" fill="none"/><path d="M4 17 Q7 15 10 17" stroke="#a0522d" stroke-width="1.2" fill="none"/></svg>
<svg class="abs" style="left:925px;top:107px" width="20" height="20" viewBox="0 0 20 20" ><rect width="20" height="20" rx="4.5" fill="#e8641b"/><text x="10" y="15" font-family="Liberation Sans,sans-serif" font-size="14.5" font-weight="bold" fill="#fff" text-anchor="middle" letter-spacing="-0.3">f-f</text></svg>
<svg class="abs" style="left:960px;top:107px" width="20" height="20" viewBox="0 0 20 20" ><rect x="0.5" y="2" width="17" height="15" rx="1.5" fill="#dfeaf5" stroke="#8aa4c0" stroke-width=".8"/><rect x="2.5" y="4" width="13" height="11" fill="#fff"/><rect x="6" y="0.5" width="7" height="3.5" rx="1" fill="#b8c4d4"/><path d="M17.5 5.5 L19.8 7.8 L10.5 17.2 L8.2 14.8 Z" fill="#2f7fe0"/><path d="M17.5 5.5 L19.8 7.8 L18.3 9.3 L16 7 Z" fill="#e83030"/><path d="M8.2 14.8 L10.5 17.2 L6.8 18.8 Z" fill="#f0c070"/><path d="M11 9 L14 12" stroke="#8fc0f5" stroke-width="1"/></svg>
<svg class="abs" style="left:995px;top:107px" width="20" height="20" viewBox="0 0 20 20" ><rect width="20" height="20" fill="#ec4444"/><path d="M3 3 L17 3 L17 7.5 L12 7.5 Q9 7.5 9 10 Q9 12.5 12 12.5 L17 12.5 L17 17 L3 17 Z" fill="#fff"/><path d="M6.5 6.5 L11 6.5 L13.5 9.5 L11 12.5 L8 11.5 Z" fill="#ec4444"/></svg>
<svg class="abs" style="left:1031px;top:107px" width="20" height="20" viewBox="0 0 20 20" ><rect width="20" height="20" fill="#fff"/><path d="M4.5 3 L15.5 3 L15.5 7 L14.3 7 Q14 4.5 11.3 4.3 L11.3 15.8 Q11.3 16.6 13 16.8 L13 17.8 L7 17.8 L7 16.8 Q8.7 16.6 8.7 15.8 L8.7 4.3 Q6 4.5 5.7 7 L4.5 7 Z" fill="#e20074"/><rect x="2.8" y="9" width="3" height="3" fill="#e20074"/><rect x="14.2" y="9" width="3" height="3" fill="#e20074"/></svg>
<svg class="abs" style="left:1066.2px;top:107px" width="20" height="20" viewBox="0 0 20 20" ><path d="M11.5 0.8 L19.2 8.8 L9 18.5 L1.3 10.5 Z" fill="none" stroke="#8bc34a" stroke-width="1.4"/><path d="M9.5 10.5 L16.5 8.5 L17.5 19 Z" fill="none" stroke="#26b5c6" stroke-width="1.3"/></svg>
<svg class="abs" style="left:1101.9px;top:107px" width="20" height="20" viewBox="0 0 20 20" ><circle cx="5.5" cy="2" r="1.6" fill="#1a1aff"/><path d="M1 5 L10 5 L8 10 L8.5 19 L6 19 L5.5 12 L5 19 L2.5 19 L3 10 Z" fill="#2b2bf0"/><circle cx="15" cy="2" r="1.6" fill="#f01a1a"/><path d="M10.5 5 L19.5 5 L17.5 10 L18 19 L15.5 19 L15 12 L14.5 19 L12 19 L12.5 10 Z" fill="#f02b2b"/><path d="M3 13 h5 v6 h-5 z" fill="#8080ff" opacity=".7"/><path d="M12.5 13 h5 v6 h-5 z" fill="#ff9090" opacity=".7"/><path d="M6.5 17.5 h3 M16 17.5 h3" stroke="#ddd" stroke-width="1.5"/></svg>
<svg class="abs" style="left:1138px;top:107px" width="20" height="20" viewBox="0 0 20 20" ><path d="M0.5 3.2 Q0.5 2.4 1.3 2.4 L5.6 2.4 L7 4 L14.2 4 Q15 4 15 4.8 L15 18.4 L0.5 18.4 Z" fill="#b8860b"/><path d="M1.2 3.6 L5.2 3.6 L6.6 5 L14 5 L14 10 L1.2 10 Z" fill="#d9a514"/><path d="M4.6 9.2 L8.2 9.2 L9.8 7.4 L19.6 7.4 L15.6 18.4 L0.6 18.4 Z" fill="#ffd000"/><path d="M4.6 9.6 L8.4 9.6 L10 7.9 L19 7.9" fill="none" stroke="#fff3b0" stroke-width="1.1"/><path d="M3 18 L16 18 L17.5 13 L4.5 13 Z" fill="#ffc400" opacity=".6"/></svg>
<svg class="abs" style="left:1173px;top:107px" width="20" height="20" viewBox="0 0 20 20" ><rect x="-0.5" y="-1" width="21" height="22" fill="#0a0af0" stroke="#6c6cff" stroke-width="1"/><circle cx="9.5" cy="4" r="1.8" fill="#fff"/><path d="M7 8 L11 8 L11 16 L12.5 17.5 L6.5 17.5 L8 16 L8 9 Z" fill="#fff"/></svg>
<svg class="abs" style="left:1209px;top:107px" width="20" height="20" viewBox="0 0 20 20" ><rect y="2" width="20" height="16" rx="2" fill="#7ac143"/><text x="7" y="13" font-family="Liberation Sans,sans-serif" font-size="10" font-weight="bold" fill="#fff" text-anchor="middle" >w</text><text x="14.5" y="14.5" font-family="Liberation Sans,sans-serif" font-size="13" font-weight="bold" fill="#fff" text-anchor="middle" >3</text></svg>
<svg class="abs" style="left:1244px;top:107px" width="20" height="20" viewBox="0 0 20 20" ><circle cx="10" cy="10" r="8.8" fill="none" stroke="#9c9c9c" stroke-width="1.8"/><ellipse cx="10" cy="10" rx="4" ry="8.8" fill="none" stroke="#9c9c9c" stroke-width="1.6"/><path d="M2 6.5 h16 M2 13.5 h16" stroke="#9c9c9c" stroke-width="1.6"/></svg>
<svg class="abs" style="left:1279px;top:107px" width="20" height="20" viewBox="0 0 20 20" ><circle cx="10" cy="10" r="9.2" fill="#fff" stroke="#cc2a2a" stroke-width="1.2"/><text x="10" y="14.5" font-family="Liberation Sans,sans-serif" font-size="13" font-weight="normal" fill="#d02020" text-anchor="middle" >sh</text></svg>
<svg class="abs" style="left:1314px;top:107px" width="20" height="20" viewBox="0 0 20 20" ><rect width="20" height="20" fill="#fff"/><text x="6.8" y="13.5" font-family="Liberation Sans,sans-serif" font-size="12" font-weight="bold" fill="#3a9bdc" text-anchor="middle" >w</text><text x="15" y="13.5" font-family="Liberation Sans,sans-serif" font-size="12" font-weight="normal" fill="#aaa" text-anchor="middle" >p</text></svg>
<svg class="abs" style="left:1350px;top:107px" width="20" height="20" viewBox="0 0 20 20" ><g stroke-width="3.2" stroke-linecap="round"><path d="M7.6 2 v5.2" stroke="#36c5f0"/><path d="M2 7.6 h5.6" stroke="#36c5f0"/><path d="M12.4 2 v6" stroke="#2eb67d"/><path d="M12.4 7.6 h0.1 M17.8 7.6 h0.1" stroke="#2eb67d"/><path d="M12.4 12.4 h5.6" stroke="#ecb22e"/><path d="M12.4 12.4 v0.1 M12.4 17.8 v0.1" stroke="#ecb22e"/><path d="M7.6 12 v6" stroke="#e01e5a"/><path d="M2.2 12.4 h0.1" stroke="#e01e5a"/></g></svg>
<svg class="abs" style="left:1385px;top:107px" width="20" height="20" viewBox="0 0 20 20" ><path d="M6 1 L10 5 L15 0.5" fill="none" stroke="#9aa0a8" stroke-width="1.5"/><rect x="1" y="5" width="17" height="12.5" rx="2.5" fill="#1c1c1c" stroke="#aab0b8" stroke-width="2.2"/></svg>
<svg class="abs" style="left:1420px;top:107px" width="20" height="20" viewBox="0 0 20 20" ><rect width="20" height="20" fill="#3f8fe0"/><path d="M3 3.5 L17 2.5 L17 13.5 L7.5 13.8 L5 17 L5.5 13.8 L3 13.8 Z" fill="none" stroke="#fff" stroke-width="1.3"/><path d="M8.5 6 h3 v2.6 h-3 z M12.3 6 h3 v2.6 h-3 z M8.5 9.4 h3 v2.6 h-3 z M12.3 9.4 h3 v2.6 h-3 z" fill="#fff"/></svg>
<svg class="abs" style="left:1455px;top:107px" width="20" height="20" viewBox="0 0 20 20" ><rect width="20" height="20" fill="#2f323a"/><path d="M3 17.5 Q5.5 13 9 9.5 Q14 4 17.5 2.5 Q17 7 12.5 11.5 Q9 14.5 5.5 15.5 Z" fill="none" stroke="#fff" stroke-width="1.4"/><path d="M3 17.5 L12 8" stroke="#fff" stroke-width="1"/></svg>
<svg class="abs" style="left:1490px;top:107px" width="20" height="20" viewBox="0 0 20 20" ><path d="M10 0 A10 10 0 0 0 10 20 Z" fill="#4a3dff"/><path d="M10 0 A10 10 0 0 1 10 20 Z" fill="#2ac4ff"/><path d="M10 5 A5 5 0 0 0 10 15 Z" fill="#f04a5a"/><path d="M10 5.5 A4.5 4.5 0 0 1 10 14.5 Z" fill="#b8c8ff"/><circle cx="10" cy="10" r="1.3" fill="#000"/></svg>
<svg class="abs" style="left:1525px;top:107px" width="20" height="20" viewBox="0 0 20 20" ><path d="M1 4.5 L8.5 3.4 L8.5 9.5 L1 9.5 Z M9.7 3.2 L18 2 L18 9.5 L9.7 9.5 Z M1 10.7 L8.5 10.7 L8.5 16.8 L1 15.7 Z M9.7 10.7 L18 10.7 L18 18.2 L9.7 17 Z" fill="#1fc0f0"/></svg>
<svg class="abs" style="left:1561px;top:107px" width="20" height="20" viewBox="0 0 20 20" ><rect width="20" height="20" rx="3" fill="#2b5fa5"/><text x="7.5" y="12" font-family="Liberation Sans,sans-serif" font-size="12" font-weight="bold" fill="#fff" text-anchor="middle" font-style="italic">C</text><text x="12.5" y="17" font-family="Liberation Sans,sans-serif" font-size="12" font-weight="bold" fill="#fff" text-anchor="middle" font-style="italic">B</text></svg>
<svg class="abs" style="left:1596px;top:107px" width="20" height="20" viewBox="0 0 20 20" ><path d="M4.5 2 L7 2 L5.5 17.5 L3 17.5 Z" fill="#fff"/><path d="M8.5 2.5 L13 2.5 L13 17 L8 17" fill="none" stroke="#fff" stroke-width="2"/></svg>
<svg class="abs" style="left:1631px;top:107px" width="20" height="20" viewBox="0 0 20 20" ><rect width="20" height="20" fill="#87ceeb"/><path d="M4 8 Q5 4.5 9.5 4.5 Q13 4 15 6.5 L17.5 9 L17 11.5 L13.5 12 L14.5 13.5 L11.5 15 L10.5 17.5 L7.5 15.5 Q4.5 13.5 5.5 10.5 Z" fill="#0a0a0a"/></svg>
<svg class="abs" style="left:1666px;top:107px" width="20" height="20" viewBox="0 0 20 20" ><g transform="rotate(-8 10 10)"><rect x="1.5" y="1.5" width="17" height="17" rx="3" fill="#fff" stroke="#08b26a" stroke-width="2"/></g><text x="10" y="14.8" font-family="Liberation Sans,sans-serif" font-size="13" font-weight="normal" fill="#08b26a" text-anchor="middle" >D</text></svg>
<svg class="abs" style="left:1702px;top:107px" width="20" height="20" viewBox="0 0 20 20" ><rect y="1" width="20" height="18" fill="#ffff00"/><text x="10" y="13.5" font-family="Liberation Sans,sans-serif" font-size="9.5" font-weight="bold" fill="#2a2ad0" text-anchor="middle" >b64</text></svg>
<svg class="abs" style="left:1738px;top:107px" width="20" height="20" viewBox="0 0 20 20" ><rect width="20" height="20" rx="3" fill="#2b5fa5"/><text x="7.5" y="12" font-family="Liberation Sans,sans-serif" font-size="12" font-weight="bold" fill="#fff" text-anchor="middle" font-style="italic">C</text><text x="12.5" y="17" font-family="Liberation Sans,sans-serif" font-size="12" font-weight="bold" fill="#fff" text-anchor="middle" font-style="italic">B</text></svg>
<svg class="abs" style="left:1773px;top:107px" width="20" height="20" viewBox="0 0 20 20" ><path d="M10 0.5 C14.5 0.5 17 3.8 17 7.3 C17 11.5 12 15 10 19.8 C8 15 3 11.5 3 7.3 C3 3.8 5.5 0.5 10 0.5 Z" fill="#6a6cf5"/><circle cx="10" cy="7" r="3.8" fill="#c9c9ff"/><circle cx="10" cy="7" r="2" fill="#a0a0ff"/></svg>
<svg class="abs" style="left:1808px;top:107px" width="20" height="20" viewBox="0 0 20 20" ><circle cx="10" cy="10" r="10" fill="#fff"/><path d="M10.3 1.8 C11.8 5 15 6.2 15.8 10.5 C16.5 14.8 13.5 18.3 10 18.3 C6.3 18.3 3.5 15.3 4 11.5 C4.3 9.2 5.8 8 6.4 6 C7.3 6.9 7.6 8 7.5 9.2 C9.2 7.4 10.6 4.8 10.3 1.8 Z" fill="#f5133a"/><path d="M10.3 10.8 C11.6 12.4 12.9 13.5 12.7 15.5 C12.5 17.2 11.3 18.3 10 18.3 C8.5 18.3 7.4 17.2 7.4 15.7 C7.4 14.2 8.3 13.5 8.9 12.5 C9.3 13.1 9.4 13.6 9.4 14.1 C10 13.2 10.4 12.1 10.3 10.8 Z" fill="#fff"/></svg>
<svg class="abs" style="left:1843.2px;top:107px" width="20" height="20" viewBox="0 0 20 20" ><path d="M0.5 3.2 Q0.5 2.4 1.3 2.4 L5.6 2.4 L7 4 L14.2 4 Q15 4 15 4.8 L15 18.4 L0.5 18.4 Z" fill="#b8860b"/><path d="M1.2 3.6 L5.2 3.6 L6.6 5 L14 5 L14 10 L1.2 10 Z" fill="#d9a514"/><path d="M4.6 9.2 L8.2 9.2 L9.8 7.4 L19.6 7.4 L15.6 18.4 L0.6 18.4 Z" fill="#ffd000"/><path d="M4.6 9.6 L8.4 9.6 L10 7.9 L19 7.9" fill="none" stroke="#fff3b0" stroke-width="1.1"/><path d="M3 18 L16 18 L17.5 13 L4.5 13 Z" fill="#ffc400" opacity=".6"/></svg>
<svg class="abs" style="left:1892.5px;top:109.5px" width="16.5" height="16" viewBox="0 0 17 16" ><path d="M1 1 L8 8 L1 15 M9 1 L16 8 L9 15" fill="none" stroke="#b4b4b4" stroke-width="2.2"/></svg>
</div>


<div id="page">
  <div id="divider"></div><div id="shadow"></div>
  <h1 style="left:27px;top:30px;font-size:39.8px">Style bearbeiten</h1>
  <div class="inp" style="left:27px;top:99px;width:412px;height:37px;line-height:37px;padding-left:5px">hc042001.smartconfig.net</div>
  <div class="cb" style="left:27.1px;top:143.1px"><svg width="19.7" height="19.7" viewBox="0 0 19.7 19.7" style="position:absolute;left:-1px;top:-1px"><path d="M3.6 9.4 L8 13.4 L14.9 4.9" fill="none" stroke="#000" stroke-width="3.1" stroke-linejoin="miter"/></svg></div>
  <div class="t" style="left:53.5px;top:144px;font-size:19.7px">Aktiviert</div>
  <div class="cb" style="left:143.1px;top:143.1px"><svg width="19.7" height="19.7" viewBox="0 0 19.7 19.7" style="position:absolute;left:-1px;top:-1px"><path d="M3.6 9.4 L8 13.4 L14.9 4.9" fill="none" stroke="#000" stroke-width="3.1" stroke-linejoin="miter"/></svg></div>
  <div class="t" style="left:170px;top:144px;font-size:19.6px">Echtzeitvorschau</div>
  <div class="btn" style="left:27px;top:193px;width:121px;letter-spacing:.3px">Speichern</div>
  <div class="btn" style="left:153px;top:193px;width:195px;letter-spacing:.39px">Code formatieren</div>
  <div class="btn" style="left:27px;top:240px;width:234px">Zurück zum Verwalten</div>
  <h2 style="left:25.7px;top:313.6px;font-size:29.9px">Mozilla Format</h2>
  <svg class="abs" style="left:242px;top:318.5px" width="25" height="25" viewBox="0 0 25 25"><circle cx="12.5" cy="12.5" r="10.5" fill="none" stroke="#6a6a6a" stroke-width="2"/><text x="12.6" y="19.2" font-family="Liberation Serif,serif" font-weight="bold" font-size="19" text-anchor="middle" fill="#666">i</text></svg>
  <div class="btn" style="left:27px;top:371px;width:134px;letter-spacing:.36px">Importieren</div>
  <div class="btn" style="left:166px;top:371px;width:136px;letter-spacing:.32px">Exportieren</div>
  <div class="abs" style="left:6px;top:447px;width:0;height:0;border-top:6.2px solid transparent;border-bottom:6.2px solid transparent;border-left:10.5px solid #000"></div>
  <h2 style="left:26.5px;top:435.7px;font-size:29.8px">Optionen</h2>

  <div class="t" style="left:538.5px;top:29px;font-size:19.8px">Code 1</div>
  <div id="ed">
    <div class="abs" style="left:90.5px;top:168.3px;width:1270.5px;height:23.3px;background:#e8f2ff"></div>
    <div id="gut">
      <div class="ln" style="top:6.6px">1</div><div class="fold" style="top:16px"></div>
      <div class="ln" style="top:29.7px">2</div>
      <div class="ln" style="top:52.8px">3</div>
      <div class="ln" style="top:75.9px">4</div>
      <div class="ln" style="top:99.0px">5</div><div class="fold" style="top:108.4px"></div>
      <div class="ln" style="top:122.1px">6</div>
      <div class="ln" style="top:145.2px">7</div>
      <div class="ln" style="top:168.3px">8</div>
    </div>
    <div class="cl" style="top:7.0px"><span class="c-def">#chatroom_messages</span> {</div>
    <div class="cl" style="top:30.1px">background: <span class="c-atom">#D2B48C</span> <span class="c-kw">!important</span>;</div>
    <div class="cl" style="top:53.2px">  }</div>
    <div class="cl" style="top:99.4px"><span class="c-def">#main_input_textarea</span> &gt; *,<span class="c-tag">TEXTAREA</span>{</div>
    <div class="cl" style="top:122.5px">background: <span class="c-kw">red</span> <span class="c-kw">!important</span>;</div>
    <div class="cl" style="top:145.6px">  }</div>
    <div class="abs" style="left:0;top:683px;width:1361px;height:1px;background:#ddd"></div>
    <div class="abs" style="left:14.4px;top:687.9px;width:1330px;height:3.4px;background:radial-gradient(circle at 3px 1.7px,#cbcbcb 1.3px,rgba(203,203,203,0) 1.9px) 0 0/6px 3.4px repeat-x"></div>
  </div>

  <div class="t" style="left:512px;top:778px;font-size:20px">Gilt für</div>
  <svg class="abs" style="left:576.9px;top:775.8px" width="25" height="25" viewBox="0 0 25 25"><circle cx="12.5" cy="12.5" r="10.5" fill="none" stroke="#6a6a6a" stroke-width="2"/><text x="12.6" y="19.2" font-family="Liberation Serif,serif" font-weight="bold" font-size="19" text-anchor="middle" fill="#666">i</text></svg>
  <div class="inp" style="left:606px;top:770.2px;width:424px;height:35.6px;line-height:35px;padding-left:9.5px">URLs auf der Domain</div>
  <div class="abs" style="left:1004.8px;top:784.2px;width:0;height:0;border-left:6.9px solid transparent;border-right:6.9px solid transparent;border-top:8px solid #000"></div>
  <div class="inp" style="left:1035px;top:770.2px;width:761px;height:35.6px;line-height:35px;padding-left:5px">hc042001.smartconfig.net</div>
  <div class="abs" style="left:1804px;top:785.4px;width:20px;height:4.9px;background:#999"></div>
  <div class="abs" style="left:1841px;top:785.4px;width:20px;height:4.9px;background:#999"></div>
  <div class="abs" style="left:1848.5px;top:778.1px;width:5px;height:19.7px;background:#999"></div>
  <div class="btn" style="left:512px;top:820px;width:299px;height:33px;line-height:33px">Weiteren Bereich hinzufügen</div>
  <div class="btn" style="left:816px;top:820px;width:113px;height:33px;line-height:33px;letter-spacing:.5px">Kopieren</div>
  <div class="btn" style="left:934px;top:820px;width:194px;height:33px;line-height:33px;letter-spacing:.42px">Code formatieren</div>
  <div class="abs" style="left:594px;top:755.8px;width:782px;height:67.1px;border:5px solid #ed1c24"></div>
</div>

<div id="addon">
<svg class="abs" style="left:0;top:2px" width="1920" height="20" viewBox="0 0 1920 20" preserveAspectRatio="none"><path d="M-132 20 L-132 17 Q-82 10 -12 0 L118 0 Q238 5 305 19 L305 20 Z" fill="#a8caf2"/><path d="M306 20 L306 17 Q356 10 426 0 L556 0 Q676 5 743 19 L743 20 Z" fill="#a8caf2"/><path d="M744 20 L744 17 Q794 10 864 0 L994 0 Q1114 5 1181 19 L1181 20 Z" fill="#a8caf2"/><path d="M1181 20 L1181 17 Q1231 10 1301 0 L1431 0 Q1551 5 1618 19 L1618 20 Z" fill="#a8caf2"/><path d="M1619 20 L1619 17 Q1669 10 1739 0 L1869 0 Q1989 5 2056 19 L2056 20 Z" fill="#a8caf2"/></svg>
<svg class="abs" style="left:328.5px;top:2.5px" width="94" height="19.5" viewBox="0 0 94 20" preserveAspectRatio="none"><defs><linearGradient id="fxo" x1="0" y1="0" x2="0" y2="1"><stop offset="0" stop-color="#f4a86a"/><stop offset="1" stop-color="#de6a18"/></linearGradient></defs><path d="M0 20 L0.5 16 L5 0.5 L32 0.5 L33.5 5 L41 5.5 L44 8.5 L37 13 L36.5 20 Z" fill="url(#fxo)"/><path d="M33.5 5 L41 5.5 L44 8.5 L37 13 Z" fill="#f6c08a"/><path d="M36.5 20 L37 13 L44 8.5 L52 4 L62 2 L72 0.5 L79 6 L80 20 Z" fill="#3f70bc"/><path d="M52 9 L59 6.5 L66 9 L70 15 L66 20 L56 20 L52 15 Z" fill="#123a72"/><path d="M66 1 L72 0.5 L75 3 L70 4 Z" fill="#6a5aa0"/><path d="M74 0 L86 0 Q90 5 91 11 L93 14 L93 20 L78 20 Q80 9 74 0 Z" fill="#f2a018"/><path d="M79 3 Q84 9 82 20 L89 20 Q89 9 84 1 Q83 4 79 3 Z" fill="#ffe24a"/></svg>
<svg class="abs" style="left:766px;top:2.5px" width="94" height="19.5" viewBox="0 0 94 20" preserveAspectRatio="none"><defs><linearGradient id="fxo" x1="0" y1="0" x2="0" y2="1"><stop offset="0" stop-color="#f4a86a"/><stop offset="1" stop-color="#de6a18"/></linearGradient></defs><path d="M0 20 L0.5 16 L5 0.5 L32 0.5 L33.5 5 L41 5.5 L44 8.5 L37 13 L36.5 20 Z" fill="url(#fxo)"/><path d="M33.5 5 L41 5.5 L44 8.5 L37 13 Z" fill="#f6c08a"/><path d="M36.5 20 L37 13 L44 8.5 L52 4 L62 2 L72 0.5 L79 6 L80 20 Z" fill="#3f70bc"/><path d="M52 9 L59 6.5 L66 9 L70 15 L66 20 L56 20 L52 15 Z" fill="#123a72"/><path d="M66 1 L72 0.5 L75 3 L70 4 Z" fill="#6a5aa0"/><path d="M74 0 L86 0 Q90 5 91 11 L93 14 L93 20 L78 20 Q80 9 74 0 Z" fill="#f2a018"/><path d="M79 3 Q84 9 82 20 L89 20 Q89 9 84 1 Q83 4 79 3 Z" fill="#ffe24a"/></svg>
<svg class="abs" style="left:1204px;top:2.5px" width="94" height="19.5" viewBox="0 0 94 20" preserveAspectRatio="none"><defs><linearGradient id="fxo" x1="0" y1="0" x2="0" y2="1"><stop offset="0" stop-color="#f4a86a"/><stop offset="1" stop-color="#de6a18"/></linearGradient></defs><path d="M0 20 L0.5 16 L5 0.5 L32 0.5 L33.5 5 L41 5.5 L44 8.5 L37 13 L36.5 20 Z" fill="url(#fxo)"/><path d="M33.5 5 L41 5.5 L44 8.5 L37 13 Z" fill="#f6c08a"/><path d="M36.5 20 L37 13 L44 8.5 L52 4 L62 2 L72 0.5 L79 6 L80 20 Z" fill="#3f70bc"/><path d="M52 9 L59 6.5 L66 9 L70 15 L66 20 L56 20 L52 15 Z" fill="#123a72"/><path d="M66 1 L72 0.5 L75 3 L70 4 Z" fill="#6a5aa0"/><path d="M74 0 L86 0 Q90 5 91 11 L93 14 L93 20 L78 20 Q80 9 74 0 Z" fill="#f2a018"/><path d="M79 3 Q84 9 82 20 L89 20 Q89 9 84 1 Q83 4 79 3 Z" fill="#ffe24a"/></svg>
<svg class="abs" style="left:1641px;top:2.5px" width="94" height="19.5" viewBox="0 0 94 20" preserveAspectRatio="none"><defs><linearGradient id="fxo" x1="0" y1="0" x2="0" y2="1"><stop offset="0" stop-color="#f4a86a"/><stop offset="1" stop-color="#de6a18"/></linearGradient></defs><path d="M0 20 L0.5 16 L5 0.5 L32 0.5 L33.5 5 L41 5.5 L44 8.5 L37 13 L36.5 20 Z" fill="url(#fxo)"/><path d="M33.5 5 L41 5.5 L44 8.5 L37 13 Z" fill="#f6c08a"/><path d="M36.5 20 L37 13 L44 8.5 L52 4 L62 2 L72 0.5 L79 6 L80 20 Z" fill="#3f70bc"/><path d="M52 9 L59 6.5 L66 9 L70 15 L66 20 L56 20 L52 15 Z" fill="#123a72"/><path d="M66 1 L72 0.5 L75 3 L70 4 Z" fill="#6a5aa0"/><path d="M74 0 L86 0 Q90 5 91 11 L93 14 L93 20 L78 20 Q80 9 74 0 Z" fill="#f2a018"/><path d="M79 3 Q84 9 82 20 L89 20 Q89 9 84 1 Q83 4 79 3 Z" fill="#ffe24a"/></svg>
<div class="abs" style="left:0;top:2px;width:1920px;height:20px;background:repeating-linear-gradient(135deg,rgba(255,255,255,.22) 0,rgba(255,255,255,.22) 1px,transparent 1px,transparent 3px)"></div>
<div class="abs" style="left:304px;top:0;width:2.5px;height:22px;background:#bfeef5"></div><div class="abs" style="left:304.5px;top:0;width:1.5px;height:1.5px;background:#111;z-index:4"></div><div class="abs" style="left:304.5px;top:20.5px;width:1.5px;height:1.5px;background:#111;z-index:4"></div>
<div class="abs" style="left:741.5px;top:0;width:2.5px;height:22px;background:#bfeef5"></div><div class="abs" style="left:742.0px;top:0;width:1.5px;height:1.5px;background:#111;z-index:4"></div><div class="abs" style="left:742.0px;top:20.5px;width:1.5px;height:1.5px;background:#111;z-index:4"></div>
<div class="abs" style="left:1179px;top:0;width:2.5px;height:22px;background:#bfeef5"></div><div class="abs" style="left:1179.5px;top:0;width:1.5px;height:1.5px;background:#111;z-index:4"></div><div class="abs" style="left:1179.5px;top:20.5px;width:1.5px;height:1.5px;background:#111;z-index:4"></div>
<div class="abs" style="left:1617px;top:0;width:2.5px;height:22px;background:#bfeef5"></div><div class="abs" style="left:1617.5px;top:0;width:1.5px;height:1.5px;background:#111;z-index:4"></div><div class="abs" style="left:1617.5px;top:20.5px;width:1.5px;height:1.5px;background:#111;z-index:4"></div>
<svg class="abs" style="left:1540px;top:3px" width="18" height="19" viewBox="0 0 18 19" ><circle cx="9" cy="10" r="8.5" fill="#b8bcc4" stroke="#8e929a" stroke-width="1"/><circle cx="1.5" cy="9" r="1.5" fill="#a0a4ac"/><circle cx="16.5" cy="9" r="1.5" fill="#a0a4ac"/><path d="M6 1.5 L9 0 L12 1.5" stroke="#8e929a" fill="none"/><circle cx="6" cy="8" r="1.2" fill="#666"/><circle cx="12" cy="8" r="1.2" fill="#666"/><path d="M4.5 12 Q9 17 13.5 12 Z" fill="#eee" stroke="#777" stroke-width=".8"/></svg>
<svg class="abs" style="left:1577px;top:2px" width="18.5" height="20" viewBox="0 0 18.5 20" ><rect x="1" y="1" width="14" height="16" fill="#555"/><rect x="3.5" y="2" width="9" height="6" fill="#4a9be8"/><rect x="3.5" y="9.5" width="9" height="6" fill="#3a7fd0"/><path d="M2 3 v12 M14 3 v12" stroke="#ddd" stroke-width="1" stroke-dasharray="1.5 1.5"/><circle cx="13.5" cy="15" r="4.2" fill="#5ab82a" stroke="#fff" stroke-width=".6"/><path d="M11.5 15 h4 M13.5 13 v4" stroke="#fff" stroke-width="1.2"/></svg>
<svg class="abs" style="left:1741px;top:2px" width="20" height="20" viewBox="0 0 20 20" ><rect x="0.5" y="0.5" width="19" height="19" rx="4.5" fill="#7e8794" stroke="#d4dae2" stroke-width="1"/><circle cx="6" cy="13.5" r="3.3" fill="none" stroke="#e4e8ee" stroke-width="1.5"/><circle cx="14" cy="13.5" r="3.3" fill="none" stroke="#e4e8ee" stroke-width="1.5"/></svg>
<svg class="abs" style="left:1780px;top:2px" width="18" height="20" viewBox="0 0 18 20" ><path d="M9 0.5 Q13 2.5 17.5 2.5 Q17.5 14 9 19.5 Q0.5 14 0.5 2.5 Q5 2.5 9 0.5 Z" fill="#6e7784"/><text x="9" y="12" font-family="Liberation Sans,sans-serif" font-size="8.5" font-weight="bold" fill="#e8e8e8" text-anchor="middle" >uo</text></svg>
<svg class="abs" style="left:1817.5px;top:2px" width="17.5" height="20" viewBox="0 0 17.5 20" ><rect x="2" y="0.5" width="13.5" height="19" rx="2" fill="#4aa0aa"/><path d="M2 7.5 L0.5 10 L2 12.5 M15.5 7.5 L17 10 L15.5 12.5" fill="#4aa0aa" stroke="#4aa0aa"/><text x="8.8" y="15.5" font-family="Liberation Sans,sans-serif" font-size="15" font-weight="bold" fill="#2a5a66" text-anchor="middle" >S</text></svg>
<svg class="abs" style="left:1855px;top:2px" width="17" height="21" viewBox="0 0 17 21" ><path d="M1 0.5 L11 0.5 L16 5.5 L16 19.5 L12 16.5 L8.5 19.5 L5 16.5 L1 19.5 Z" fill="#cfe0f5" stroke="#3a5aa0" stroke-width="1"/><path d="M4 6 h9 M4 9 h9 M4 12 h9" stroke="#3a5aa0" stroke-width="1"/></svg>
<svg class="abs" style="left:1892px;top:2px" width="19" height="20" viewBox="0 0 19 20" ><text x="5.5" y="8" font-family="Noto Sans CJK SC,sans-serif" font-size="8" font-weight="bold" fill="#3a7fd8" text-anchor="middle" >文</text><text x="13.5" y="17.5" font-family="Liberation Sans,sans-serif" font-size="10" font-weight="bold" fill="#3a7fd8" text-anchor="middle" >A</text><path d="M10 2.5 Q15.5 2.5 17.5 8 M9 17.5 Q3.5 17.5 1.5 12" fill="none" stroke="#b8d020" stroke-width="1.400"/><path d="M17.5 8 l-2.5 -.5 M17.5 8 l1 -2.3 M1.5 12 l2.5 .5 M1.5 12 l-1 2.3" stroke="#b8d020" stroke-width="1.2"/></svg>
</div>
<div id="task">
<svg class="abs" style="left:11.5px;top:9px" width="20.5" height="20" viewBox="0 0 20.5 20" ><path d="M0 2.8 L8.5 1.6 L8.5 9.5 L0 9.5 Z M9.7 1.400 L20.5 0 L20.5 9.5 L9.7 9.5 Z M0 10.7 L8.5 10.7 L8.5 18.5 L0 17.3 Z M9.7 10.7 L20.5 10.7 L20.5 20 L9.7 18.6 Z" fill="#fff"/></svg>
<svg class="abs" style="left:61px;top:9px" width="20" height="20" viewBox="0 0 20 20" ><path d="M2 6 L8 3 L8 17 L2 14 Z" fill="#d8282a"/><path d="M8 5 L14 2 L14 10 L8 12 Z" fill="#f2c81a"/><path d="M10 9 L17 6 L17 14 L10 17 Z" fill="#3ab04a"/><path d="M3 12 L12 14 L18 11 L18 17 L11 20 L3 17 Z" fill="#8a4ac0"/><path d="M4 8 L9 10 L9 16 L4 14 Z" fill="#2a6ae0"/></svg>
<svg class="abs" style="left:107px;top:10px" width="20.5" height="18" viewBox="0 0 20.5 18" ><rect x="2.5" y="0.5" width="17" height="12" rx="1" fill="#e8eef4" stroke="#a8b0b8" stroke-width="1"/><path d="M4 8 L8 4.5 L11 8.5 L14 5 L18 8" fill="none" stroke="#2a7ad8" stroke-width="1.3"/><rect x="8" y="12.5" width="6" height="3" fill="#b8bec6"/><rect x="5" y="15.5" width="12" height="2" fill="#d0d4da"/><rect x="0" y="4" width="2.5" height="10" fill="#9aa0a8"/></svg>
<svg class="abs" style="left:153px;top:9px" width="20" height="20" viewBox="0 0 20 20" ><circle cx="10" cy="10" r="9" fill="none" stroke="#fff" stroke-width="2"/><path d="M2 14 L7.5 8.5 L10.5 11.5 L13.5 9 L18 13.5 Q15 19 10 19 Q4.5 19 2 14 Z" fill="#fff"/><path d="M9 5 Q12 3 15 5.5" stroke="#fff" stroke-width="1.3" fill="none"/></svg>
<svg class="abs" style="left:196.5px;top:9px" width="20.5" height="20" viewBox="0 0 20.5 20" ><defs><radialGradient id="tbg2" cx=".4" cy=".3" r=".8"><stop offset="0" stop-color="#5aa8f0"/><stop offset="1" stop-color="#123a8a"/></radialGradient></defs><circle cx="10.5" cy="10" r="9.8" fill="url(#tbg2)"/><path d="M3 8.5 Q6 5.5 11 6.5 Q15.5 7.5 16.5 12.5 Q14 17 8 16 Q3.5 14.5 3 8.5 Z" fill="#f2f4f8"/><path d="M4 9 L10 13 L16 9.5" fill="none" stroke="#b8c4d8" stroke-width="1"/></svg>
<div class="t" style="left:221px;top:11.5px;font-size:15.5px;color:#fff;font-weight:normal;letter-spacing:-0.54px;">Posteingang - 2002An...</div>
<div class="abs" style="left:192px;top:35px;width:190px;height:3px;background:#8ea1b5"></div>
<svg class="abs" style="left:401.5px;top:10px" width="17" height="19" viewBox="0 0 17 19" ><path d="M0.5 10 Q1 1 9 1 Q16.5 1 16.5 9 L16.5 11 L5.5 11 Q6 15 10 15 Q13 15 15.5 13.5 L15.5 17 Q13 18.5 9.5 18.5 Q1 18.5 0.5 10 Z M5.5 8 L12 8 Q12 4.5 9 4.5 Q6 4.5 5.5 8 Z" fill="#1e7fe0" fill-rule="evenodd"/></svg>
<svg class="abs" style="left:446.5px;top:10px" width="19" height="18" viewBox="0 0 19 18" ><path d="M0 2 Q0 1 1 1 L6 1 L8 3 L18 3 Q19 3 19 4 L19 17 L0 17 Z" fill="#f2b81a"/><path d="M0 6 L19 6 L19 17 L0 17 Z" fill="#fad45a"/><rect x="6" y="11" width="7" height="6" fill="#3a8ae0"/><rect x="7.5" y="14" width="4" height="3" fill="#fad45a"/></svg>
<svg class="abs" style="left:492.5px;top:9px" width="18.5" height="20" viewBox="0 0 18.5 20" ><path d="M0.5 3 L13 1 L17 6 L15 19.5 L0.5 19.5 Z" fill="#8ad04a"/><path d="M0.5 3 L13 1 L17 6 L16.5 9 L0.5 9 Z" fill="#d8ecc0"/><path d="M3 6 v9 M5.5 8 v7 M8 5 v10 M10.5 9 v6" stroke="#1a3a1a" stroke-width="1.2"/><path d="M17 1 L18.5 2.5 L11 13 L9 14 L9.5 12 Z" fill="#e8a020"/></svg>
<svg class="abs" style="left:538px;top:9px" width="20" height="20" viewBox="0 0 20 20" ><rect width="20" height="20" rx="3" fill="#e8962a" stroke="#f4b860" stroke-width="1"/><circle cx="13" cy="7" r="3.5" fill="none" stroke="#fff" stroke-width="1.8"/><path d="M10.5 9.5 L4.5 15.5 L4.5 17.5 L7 17.5 L7 15.5 L9 15.5 L9 13.5 L12 11" fill="none" stroke="#fff" stroke-width="1.6"/></svg>
<svg class="abs" style="left:583.5px;top:9px" width="20" height="20" viewBox="0 0 20 20" ><circle cx="10" cy="10" r="10" fill="#22b322"/><path d="M5.5 10.5 L8.8 13.8 L14.5 7.5" fill="none" stroke="#fff" stroke-width="2.2"/></svg>
<svg class="abs" style="left:631px;top:9px" width="15" height="20" viewBox="0 0 15 20" ><g transform="rotate(-8 7 10)"><rect x="1.5" y="1.5" width="12" height="17" rx="1.5" fill="#f4f4f4" stroke="#999" stroke-width=".8"/><path d="M7.5 6 Q11 9 9 11.5 Q8 12 7.5 11 L8.2 14 L6.8 14 L7.5 11 Q7 12 6 11.5 Q4 9 7.5 6 Z" fill="#222"/><path d="M3 3 l1.5 0 M10.5 16.5 l1.5 0" stroke="#c02020" stroke-width="1.5"/></g></svg>
<svg class="abs" style="left:676px;top:10px" width="19.5" height="18" viewBox="0 0 19.5 18" ><path d="M6 0.5 L18.5 2 L17.5 17.5 L8 16 Z" fill="#c4e4f4" stroke="#e8f2f8" stroke-width=".8"/><path d="M6 0.5 L8 16 L0.5 13 Z" fill="#6a98b8"/><path d="M6 0.5 L18.5 2 L18.3 4.5 L6.5 3 Z" fill="#8ab4d0"/></svg>
<svg class="abs" style="left:722px;top:9px" width="20" height="20" viewBox="0 0 20 20" ><rect width="20" height="20" fill="#d8d8d8" stroke="#f4f4f4" stroke-width="1.5"/><rect x="2" y="2" width="16" height="16" fill="#c8c8c8"/><text x="10" y="16" font-family="Liberation Serif,sans-serif" font-size="16" font-weight="bold" fill="#e01010" text-anchor="middle" >D</text></svg>
<svg class="abs" style="left:767.5px;top:9px" width="20.5" height="20" viewBox="0 0 20.5 20" ><rect x="2" y="0.5" width="16.5" height="13" fill="#e8283a"/><rect x="4" y="2.5" width="12.5" height="8.5" fill="#3a3a40"/><rect x="8" y="13.5" width="4.5" height="3" fill="#e8283a"/><path d="M1 18.5 L19.5 18.5" stroke="#e8283a" stroke-width="2.5" stroke-dasharray="2 .8"/></svg>
<svg class="abs" style="left:815px;top:10px" width="19" height="18" viewBox="0 0 19 18" ><path d="M1 4 L5 4 L5 1.5 L10 1.5 L10 4 L18 5.5 L18 17.5 L1 15.5 Z" fill="#b4b8be" stroke="#e4e6ea" stroke-width=".8"/><circle cx="11.5" cy="11" r="4.5" fill="#6a7078" stroke="#e8eaee" stroke-width="1.2"/><circle cx="11.5" cy="11" r="2" fill="#2a2e34"/></svg>
<div class="abs" style="left:848px;top:0;width:200px;height:38px;background:#393e44"></div>
<div class="abs" style="left:848px;top:35px;width:200px;height:3px;background:#90a4b8"></div>
<svg class="abs" style="left:857.5px;top:9px" width="20.5" height="20" viewBox="0 0 20.5 20" ><rect width="20.5" height="20" fill="#f2f2f2"/><circle cx="11" cy="10" r="8" fill="#f09a1a"/><path d="M4 6 Q8 1 15 3 Q10 4 9 8 Z" fill="#2a5ab0"/><path d="M6 9 L12 8 L14 13 L7 15 Z" fill="#d86a10"/><path d="M2 14 L9 11 L10 16 L4 18 Z" fill="#555"/><circle cx="13" cy="7" r="1.5" fill="#fff"/></svg>
<div class="t" style="left:882.5px;top:11.5px;font-size:15.5px;color:#fff;font-weight:normal;letter-spacing:-0.45px;">* hc042001.smartconfi...</div>
<svg class="abs" style="left:1671px;top:14px" width="17" height="9.5" viewBox="0 0 17 9.5" ><path d="M0.7 9 L8.5 1 L16.3 9" fill="none" stroke="#fff" stroke-width="1.5"/></svg>
<svg class="abs" style="left:1698.5px;top:12px" width="20.5" height="13" viewBox="0 0 20.5 13" ><rect x="5" y="2.5" width="14.5" height="9" fill="#fff" stroke="#fff" stroke-width="1"/><rect x="19.5" y="5" width="1" height="4" fill="#fff"/><path d="M1 3 L4 3 L4 7 L1 7 Z M2 0.5 v2.5 M3.5 0.5 v2.5 M2.5 7 v3 L5 10" fill="none" stroke="#fff" stroke-width="1"/></svg>
<svg class="abs" style="left:1728.5px;top:11px" width="21" height="17" viewBox="0 0 21 17" ><rect x="4.5" y="1" width="15.5" height="11" fill="none" stroke="#fff" stroke-width="1.2"/><path d="M12 12 v3.5 M8 16 h9" stroke="#fff" stroke-width="1.2"/><rect x="0.6" y="0.6" width="3.5" height="5" fill="#2b2f33" stroke="#fff" stroke-width="1"/><path d="M2.3 5.5 v10" stroke="#fff" stroke-width="1"/></svg>
<svg class="abs" style="left:1758.5px;top:11px" width="21" height="17" viewBox="0 0 21 17" ><path d="M1 5.5 L4 5.5 L8 1.5 L8 15.5 L4 11.5 L1 11.5 Z" fill="none" stroke="#fff" stroke-width="1.2"/><path d="M11 6 Q12.5 8.5 11 11" fill="none" stroke="#fff" stroke-width="1.1"/><path d="M14 3.5 Q17 8.5 14 13.5" fill="none" stroke="#9a9ea4" stroke-width="1.1"/><path d="M17 1 Q21.5 8.5 17 16" fill="none" stroke="#6a6e74" stroke-width="1.1"/></svg>
<div class="t" style="left:1792.5px;top:11.5px;font-size:15.5px;color:#fff;font-weight:normal;letter-spacing:-0.92px;">17:17:09</div>
<svg class="abs" style="left:1869px;top:9.5px" width="20.5" height="19.5" viewBox="0 0 20.5 19.5" ><path d="M0.7 0.7 L19.8 0.7 L19.8 14.5 L13.5 14.5 L10.3 18.5 L7 14.5 L0.7 14.5 Z" fill="none" stroke="#fff" stroke-width="1.3"/></svg>
<div class="abs" style="left:1914px;top:0;width:1px;height:38px;background:#5a5e64"></div>
</div>
</body>
</html>
